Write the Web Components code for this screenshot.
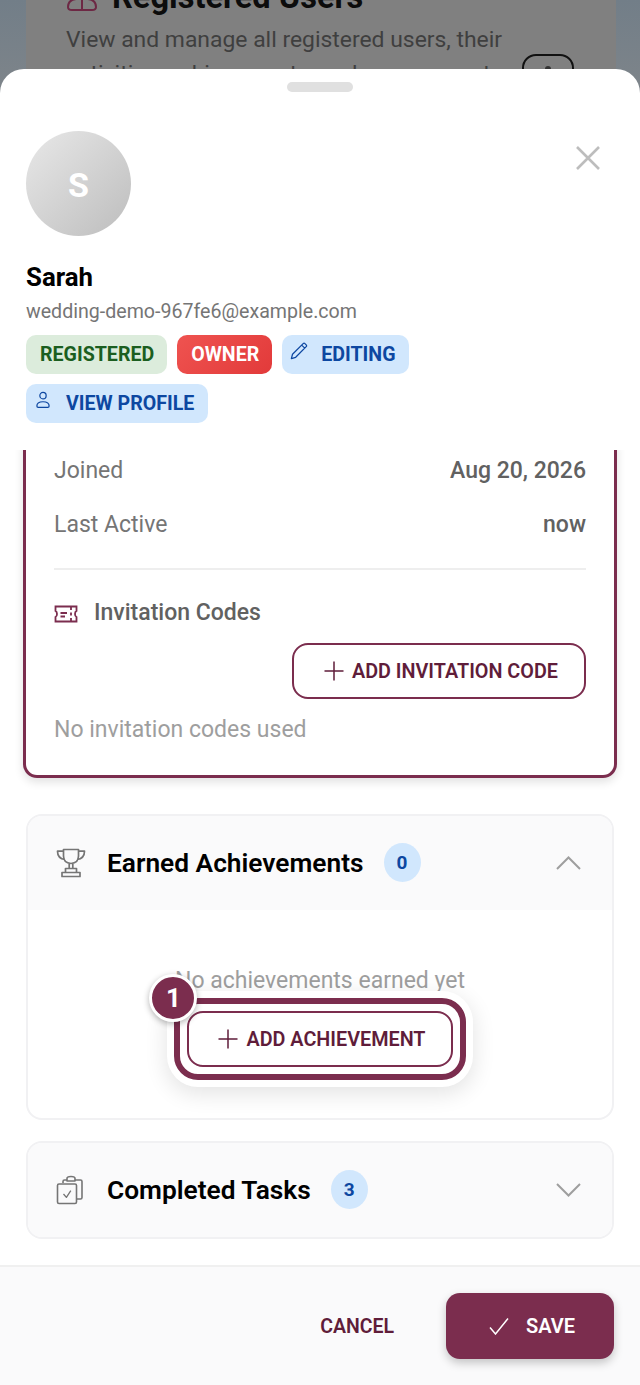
<!DOCTYPE html>
<html lang="en">
<head>
<meta charset="utf-8">
<title>Sarah</title>
<style>
  html, body { margin: 0; padding: 0; background: #808080; }
  body { font-family: Roboto, "Liberation Sans", sans-serif; width: 640px; height: 1385px; overflow: hidden; }
</style>
</head>
<body>
<user-screen></user-screen>

<script>
const icons = {
    close: '<svg width="26" height="26" viewBox="0 0 26 26" fill="none" stroke="currentColor" stroke-width="2.6"><path d="M2 2 L24 24 M24 2 L2 24"/></svg>',
    pencil: '<svg width="18" height="18" viewBox="0 0 20 20" fill="none" stroke="currentColor" stroke-width="1.4" stroke-linejoin="round"><path d="M1.5 18.5 L2.8 13.6 L14.6 1.8 Q15.6 .9 16.6 1.8 L18 3.2 Q18.9 4.2 18 5.2 L6.3 17 Z M13 3.5 L16.4 6.8"/></svg>',
    person: '<svg width="14" height="18" viewBox="0 0 16 20" fill="none" stroke="currentColor" stroke-width="1.4"><circle cx="8" cy="5" r="3.6"/><path d="M2.5 18.4 H13.5 Q15 18.4 15 16.8 Q15 12 8 12 Q1 12 1 16.8 Q1 18.4 2.5 18.4 Z"/></svg>',
    ticket: '<svg width="24" height="18" viewBox="0 0 24 18" fill="none" stroke="currentColor" stroke-width="1.8"><path d="M1.5 1.5 H22.5 V6 Q21 6.6 21 9 Q21 11.4 22.5 12 V16.5 H1.5 V12 Q3 11.4 3 9 Q3 6.6 1.5 6 Z"/><path d="M17 2 V5 M17 7.5 V10.5 M17 13 V16 M6.5 8 H13 M6.5 11.5 H11"/></svg>',
    plus: '<svg width="22" height="22" viewBox="0 0 22 22" fill="none" stroke="currentColor" stroke-width="1.5"><path d="M11 1.5 V20.5 M1.5 11 H20.5"/></svg>',
    check: '<svg width="20" height="17" viewBox="0 0 20 17" fill="none" stroke="currentColor" stroke-width="1.5"><path d="M1 9.5 L6.5 16 L19 .5"/></svg>',
    trophy: '<svg width="30" height="30" viewBox="0 0 30 30" fill="none" stroke="currentColor" stroke-width="1.7" stroke-linejoin="round"><path d="M7.5 1.5 H22.5 V8 Q22.5 15 15 15.5 Q7.5 15 7.5 8 Z"/><path d="M7.5 3.2 H1.5 Q1.5 10.5 9 11.5 M22.5 3.2 H28.5 Q28.5 10.5 21 11.5"/><path d="M13.2 15.5 V20.5 M16.8 15.5 V20.5 M9.5 20.5 H20.5 V24.5 H9.5 Z M6 24.5 H24 V28.5 H6 Z"/></svg>',
    tasks: '<svg width="28" height="30" viewBox="0 0 28 30" fill="none" stroke="currentColor" stroke-width="1.6" stroke-linejoin="round"><path d="M11 5 H8.5 Q7 5 7 6.5 V8 M19 5 H24.5 Q26 5 26 6.5 V22.5 Q26 24 24.5 24 H20.5"/><path d="M11 5 V3.5 Q11 1.5 15 1.5 Q19 1.5 19 3.5 V6 H11 Z"/><rect x="1.5" y="9" width="19" height="19.5" rx="1.5"/><path d="M7.5 19 L10.4 22.4 L14.8 15.6" stroke-width="1.3"/></svg>',
    up: '<svg width="25" height="14" viewBox="0 0 25 14" fill="none" stroke="currentColor" stroke-width="2"><path d="M1 13 L12.5 1.5 L24 13"/></svg>',
    down: '<svg width="25" height="14" viewBox="0 0 25 14" fill="none" stroke="currentColor" stroke-width="2"><path d="M1 1 L12.5 12.5 L24 1"/></svg>',
    people: '<svg width="32" height="34" viewBox="0 0 32 34" fill="none" stroke="#6d2844" stroke-width="2"><path d="M2 30 Q2 23 10 22 Q16 21 22 22 Q30 23 30 30 Q30 33 26 33 H6 Q2 33 2 30 Z M16 22 V33"/></svg>'
};

class UserChip extends HTMLElement {
    connectedCallback() {
        const icon = this.getAttribute('icon');
        this.attachShadow({ mode: 'open' }).innerHTML = `
            <style>
                :host {
                    display: inline-flex; align-items: center; height: 39px; box-sizing: border-box;
                    padding: 0 13px 0 14px; border-radius: 10px; font-size: 19.6px; font-weight: 700;
                    background: #dcecdc; color: #1b5e20;
                }
                :host([kind="owner"]) { background: linear-gradient(135deg, #ef5350, #e23a3a); color: #fff; padding: 0 13px 0 14px; }
                :host([kind="info"]) { background: #d1e7fd; color: #0d47a1; }
                :host([icon="person"]) { padding-right: 14px; }
                .i { display: flex; margin: -7px 13px 0 -6px; }
                :host([icon="person"]) .i { margin: -7px 16px 0 -4px; }
            </style>
            ${icon ? `<span class="i">${icons[icon]}</span>` : ''}<slot></slot>`;
    }
}

class InfoRow extends HTMLElement {
    connectedCallback() {
        this.attachShadow({ mode: 'open' }).innerHTML = `
            <style>
                :host { display: flex; justify-content: space-between; align-items: center; height: 54px; font-size: 23px; color: #757575; }
                b { font-weight: 500; color: #616161; }
            </style>
            <span>${this.getAttribute('label')}</span><b><slot></slot></b>`;
    }
}

class OutlineBtn extends HTMLElement {
    connectedCallback() {
        this.attachShadow({ mode: 'open' }).innerHTML = `
            <style>
                :host {
                    display: inline-flex; align-items: center; justify-content: center; gap: 7px; box-sizing: border-box;
                    height: 56px; padding: 0 26px 0 29px; background: #fff; border: 2px solid #7b2d4e; border-radius: 16px;
                    color: #5f1d3a; font-size: 19.8px; font-weight: 600; white-space: nowrap;
                }
                span { display: flex; }
            </style>
            <span>${icons.plus}</span><slot></slot>`;
    }
}

class CountBadge extends HTMLElement {
    connectedCallback() {
        this.attachShadow({ mode: 'open' }).innerHTML = `
            <style>
                :host {
                    display: inline-flex; align-items: center; justify-content: center; width: 37px; height: 39px;
                    border-radius: 50%; background: #d1e7fd; color: #0d47a1; font-size: 19px; font-weight: 700;
                }
            </style>
            <slot></slot>`;
    }
}

class SectionPanel extends HTMLElement {
    connectedCallback() {
        const open = this.hasAttribute('open');
        this.attachShadow({ mode: 'open' }).innerHTML = `
            <style>
                :host { display: block; border: 2px solid #f1f1f3; border-radius: 16px; overflow: hidden; background: #fff; }
                header { display: flex; align-items: center; box-sizing: border-box; height: 94px; padding: 0 31px 1px 28px; background: #fafafb; color: #000; }
                .icon { display: flex; width: 30px; color: #757575; margin-right: 21px; }
                h3 { margin: 0 20px 0 0; font-size: 26.3px; font-weight: 600; }
                .chev { margin-left: auto; display: flex; color: #9e9e9e; }
            </style>
            <header>
                <span class="icon">${icons[this.getAttribute('icon')]}</span>
                <h3>${this.getAttribute('heading')}</h3>
                <slot name="count"></slot>
                <span class="chev">${open ? icons.up : icons.down}</span>
            </header>
            <slot></slot>`;
    }
}

// anillo del tutorial alrededor del boton
class CoachMark extends HTMLElement {
    connectedCallback() {
        this.attachShadow({ mode: 'open' }).innerHTML = `
            <style>
                :host { display: block; position: relative; width: fit-content; }
                .ring {
                    padding: 7px; border: 6px solid #7b2d4e; border-radius: 24px; background: #fff;
                    box-shadow: 0 0 0 7px #fff, 0 6px 22px 8px rgba(0,0,0,.11);
                }
                .ring ::slotted(*) { display: flex; padding: 0 25px 0 28px; }
                .num {
                    position: absolute; left: -25px; top: -24px; width: 42px; height: 42px; border: 3px solid #fff; border-radius: 50%;
                    display: flex; align-items: center; justify-content: center; background: #7b2d4e; color: #fff;
                    font-size: 26px; font-weight: 700; box-shadow: 0 2px 6px rgba(0,0,0,.3);
                }
            </style>
            <div class="ring"><slot></slot></div>
            <div class="num">${this.getAttribute('step')}</div>`;
    }
}

class UserScreen extends HTMLElement {
    connectedCallback() {
        this.attachShadow({ mode: 'open' }).innerHTML = `
            <style>
                :host { display: block; position: relative; width: 640px; height: 1385px; overflow: hidden; background: linear-gradient(#727e88, #7f858a 100px); }
                /* lo que queda detras de la hoja */
                .behind { position: absolute; left: 26px; right: 24px; top: 0; height: 100px; background: #808080; padding-left: 40px; color: #3f3f3f; overflow: hidden; }
                .behind h2 { margin: -21px 0 0; display: flex; align-items: center; gap: 14px; font-size: 32.6px; font-weight: 700; color: #0c0c0c; height: 36px; }
                .behind h2 svg { margin-top: -7px; }
                .behind p { margin: 8px 0 0; font-size: 22.9px; line-height: 34px; width: 450px; }
                .behind i { position: absolute; left: 496px; top: 54px; width: 48px; height: 40px; border: 2px solid #111; border-radius: 14px; }
                .behind i::after { content: ""; position: absolute; left: 21px; top: 10px; width: 6px; height: 6px; border-radius: 50%; background: #333; }
                .sheet { position: absolute; left: 0; right: 0; top: 69px; bottom: 0; background: #fff; border-radius: 24px 24px 0 0; display: flex; flex-direction: column; }
                .handle { width: 66px; height: 10px; border-radius: 5px; background: #e0e0e0; margin: 13px auto 0; flex: none; }
                .top { flex: none; height: 358px; padding: 39px 26px 0; box-sizing: border-box; position: relative; }
                .close { position: absolute; right: 39px; top: 53px; display: flex; color: #bdbdbd; }
                .avatar {
                    width: 105px; height: 105px; box-sizing: border-box; padding-top: 3px; border-radius: 50%; background: linear-gradient(135deg, #e8e8e8, #bdbdbd);
                    color: #fff; font-size: 34px; font-weight: 700; display: flex; align-items: center; justify-content: center;
                }
                .name { font-size: 25.8px; font-weight: 700; color: #000; margin-top: 25px; line-height: 33px; }
                .email { font-size: 19.6px; color: #757575; margin-top: 5px; line-height: 26px; }
                .chips { display: flex; flex-wrap: wrap; gap: 10px; margin-top: 10px; width: 400px; }
                .scroll { flex: 1; min-height: 0; overflow: hidden; }
                .card {
                    margin: -10px 23px 36px; box-sizing: border-box; height: 338px; padding: 0 28px; border: 3px solid #7b2d4e; border-top: 0;
                    border-radius: 0 0 14px 14px; box-shadow: 0 4px 10px rgba(0,0,0,.12);
                }
                .rows { padding-top: 3px; padding-bottom: 17px; border-bottom: 2px solid #eee; }
                .codes { display: flex; align-items: center; gap: 16px; margin-top: 30px; font-size: 23px; font-weight: 500; color: #616161; line-height: 26px; }
                .codes span { display: flex; color: #7b2d4e; margin-top: 2px; }
                .addrow { display: flex; justify-content: flex-end; margin-top: 17px; }
                .none { margin-top: 17px; font-size: 23px; color: #9e9e9e; line-height: 28px; }
                .panels { margin: 0 26px; display: flex; flex-direction: column; gap: 21px; }
                .empty { height: 208px; display: flex; flex-direction: column; align-items: center; }
                .empty p { margin: 57px 0 0; font-size: 23px; line-height: 28px; color: #9e9e9e; }
                .empty coach-mark { margin-top: 3px; }
                .foot { flex: none; height: 120px; box-sizing: border-box; border-top: 2px solid #f0f0f0; background: #fafafb; display: flex; align-items: center; justify-content: flex-end; gap: 52px; padding: 0 26px 0 0; }
                .cancel { font-size: 19.5px; font-weight: 600; color: #5f1d3a; }
                .save {
                    width: 168px; height: 66px; box-sizing: border-box; padding-left: 4px; border-radius: 14px; background: #7b2d4e; color: #fff; font-size: 20px; font-weight: 600;
                    display: flex; align-items: center; justify-content: center; gap: 17px; box-shadow: 0 4px 10px rgba(0,0,0,.22);
                }
                .save span { display: flex; }
            </style>
            <div class="behind">
                <h2>${icons.people}Registered Users</h2>
                <p>View and manage all registered users, their activities, achievements, and engagement</p>
                <i></i>
            </div>
            <div class="sheet">
                <div class="handle"></div>
                <div class="top">
                    <div class="close">${icons.close}</div>
                    <div class="avatar">S</div>
                    <div class="name">Sarah</div>
                    <div class="email">wedding-demo-967fe6@example.com</div>
                    <div class="chips">
                        <user-chip>REGISTERED</user-chip>
                        <user-chip kind="owner">OWNER</user-chip>
                        <user-chip kind="info" icon="pencil">EDITING</user-chip>
                        <user-chip kind="info" icon="person">VIEW PROFILE</user-chip>
                    </div>
                </div>
                <div class="scroll">
                    <div class="card">
                        <div class="rows">
                            <info-row label="Joined">Aug 20, 2026</info-row>
                            <info-row label="Last Active">now</info-row>
                        </div>
                        <div class="codes"><span>${icons.ticket}</span>Invitation Codes</div>
                        <div class="addrow"><outline-btn>ADD INVITATION CODE</outline-btn></div>
                        <div class="none">No invitation codes used</div>
                    </div>
                    <div class="panels">
                        <section-panel open icon="trophy" heading="Earned Achievements">
                            <count-badge slot="count">0</count-badge>
                            <div class="empty">
                                <p>No achievements earned yet</p>
                                <coach-mark step="1"><outline-btn>ADD ACHIEVEMENT</outline-btn></coach-mark>
                            </div>
                        </section-panel>
                        <section-panel icon="tasks" heading="Completed Tasks">
                            <count-badge slot="count">3</count-badge>
                        </section-panel>
                    </div>
                </div>
                <div class="foot">
                    <span class="cancel">CANCEL</span>
                    <div class="save"><span>${icons.check}</span>SAVE</div>
                </div>
            </div>`;
    }
}

customElements.define('user-chip', UserChip);
customElements.define('info-row', InfoRow);
customElements.define('outline-btn', OutlineBtn);
customElements.define('count-badge', CountBadge);
customElements.define('section-panel', SectionPanel);
customElements.define('coach-mark', CoachMark);
customElements.define('user-screen', UserScreen);
</script>
</body>
</html>
